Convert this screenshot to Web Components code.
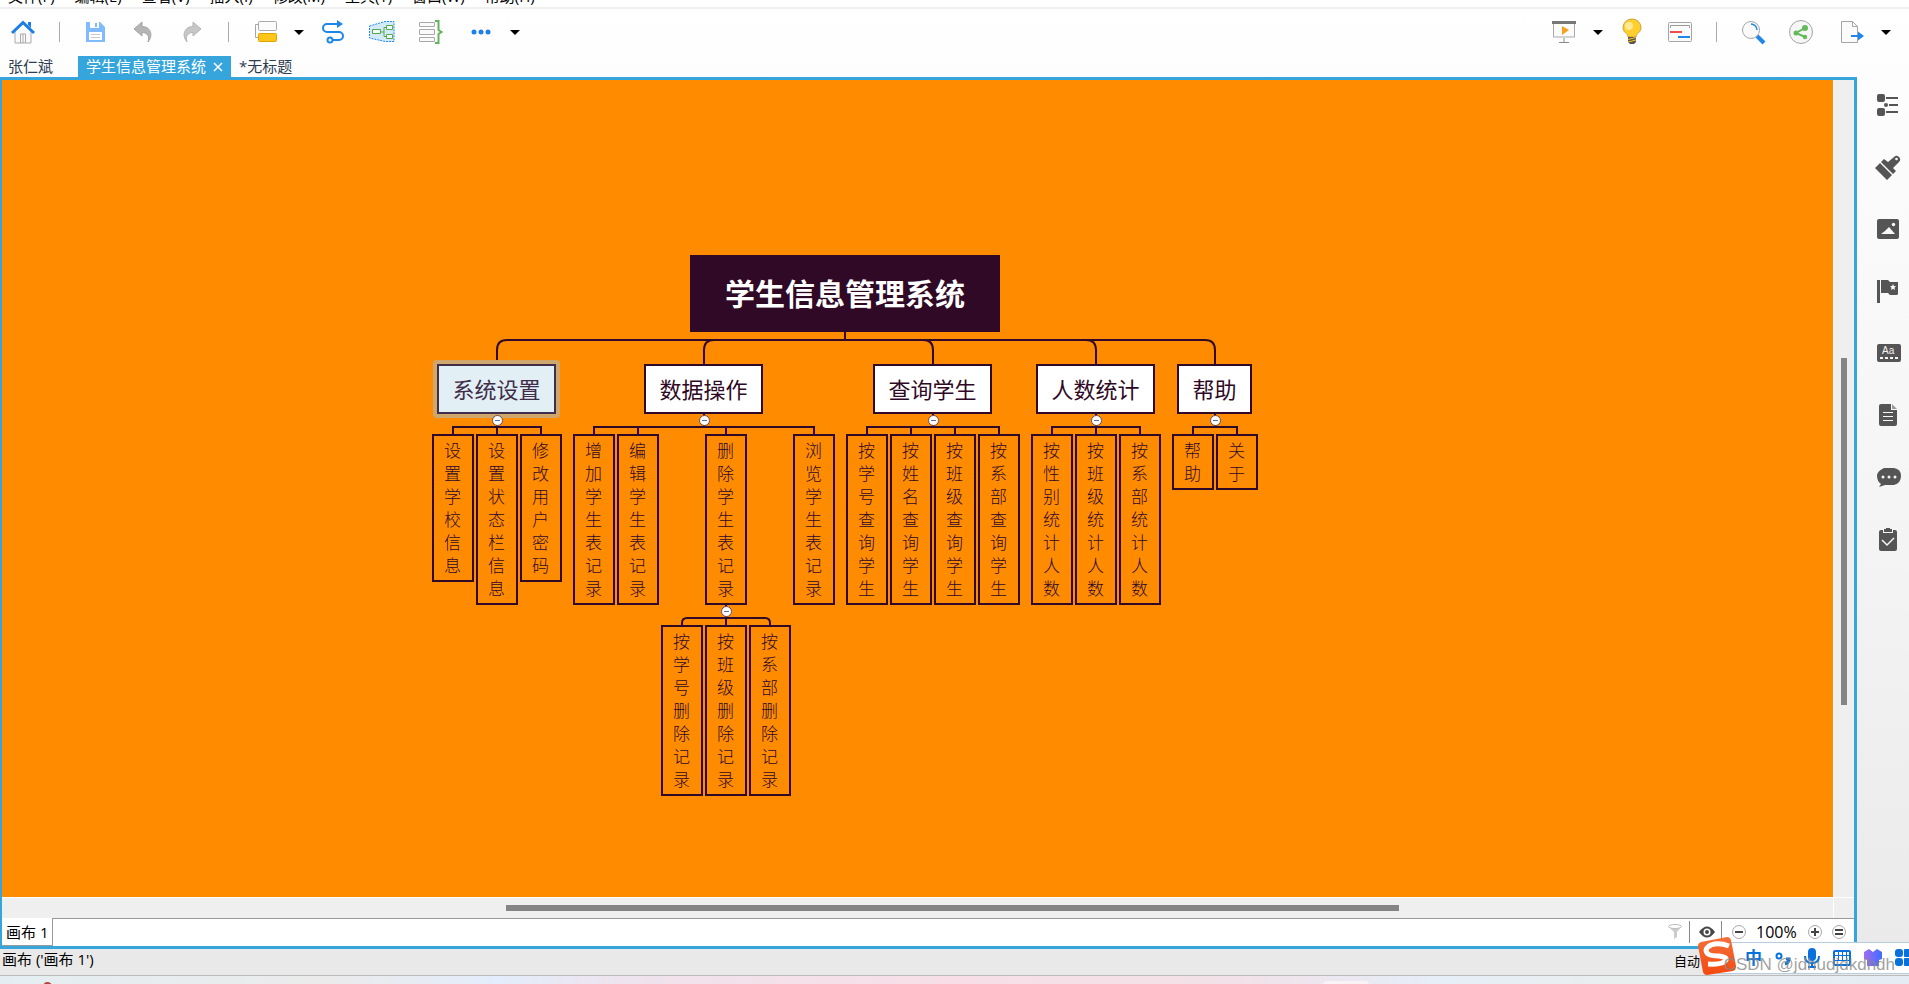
<!DOCTYPE html>
<html lang="zh-CN">
<head>
<meta charset="utf-8">
<title>学生信息管理系统</title>
<style>
    html, body { margin: 0; height: 100%; overflow: hidden; }
    body {
        font-family: "Open Sans", "Noto Sans CJK SC", sans-serif;
        font-size: 15px;
        line-height: 20px;
        color: #000;
        --azul: #35a5dc;
        --tinta: #2f0925;
    }
</style>
</head>
<body>
<app-window></app-window>

<script>
// Icons: [width, height, markup]
const ICONS = {
    home: [24, 24, '<path d="M4 11v12h16V11l-8-7z" fill="#fafafa" stroke="#a9a9a9"/><path d="M9.500 23v-9h5v9M12 14v9" fill="none" stroke="#a9a9a9"/><path d="M17 2h3v6l-3-3z" fill="#1b7fe6"/><path d="M1 13 12 2.500 23 13" fill="none" stroke="#1b7fe6" stroke-width="3"/>'],
    save: [24, 24, '<path d="M2 2h14l5 5v15H2z" fill="#80bbff"/><path d="M6 2h9v6H6z" fill="#fff"/><path d="M11 3h2v4h-2z" fill="#80bbff"/><path d="M5 12h13v8H5z" fill="#fff"/><path d="M7 14.500h9M7 17.500h9" stroke="#c8c8c8"/>'],
    undo: [24, 24, '<path d="M2 9 10 2v4.500c8 0 12 8 6 15.500 2-6-1-9.500-6-9.500V16z" fill="#b5b5b5" stroke="#a5a5a5"/>'],
    redo: [24, 24, '<path d="M21 9 13 2v4.500c-8 0-12 8-6 15.500-2-6 1-9.500 6-9.500V16z" fill="#c6c6c6" stroke="#b5b5b5"/>'],
    topic: [24, 24, '<path d="M6 4.500H2.500v13H5" fill="none" stroke="#a5a5a5"/><rect x="5.500" y="1.500" width="18" height="9" rx="1" fill="#fbfbfb" stroke="#a9a9a9"/><rect x="5.500" y="13.500" width="18" height="8" rx="1" fill="#ffc61a" stroke="#dfa400"/>'],
    relation: [24, 24, '<path d="M18 4H6a4 4 0 0 0 0 8h12a4 4 0 0 1 0 8h-7" fill="none" stroke="#1f87ea" stroke-width="2"/><path d="m16 0 6 4-6 4z" fill="#1f87ea"/><circle cx="9" cy="20" r="2.500" fill="#fff" stroke="#1f87ea" stroke-width="2"/>'],
    boundary: [26, 24, '<path d="M.5 6 16 1.500h9v20h-9L.5 18z" fill="#d3eafd" stroke="#2088e8" stroke-dasharray="2 1"/><path d="M11 12h4M19 7.500h-4v9h4" fill="none" stroke="#54aa4d"/><path d="M3.500 9.500h8v4h-8zM17.500 5.500h6v4h-6zM17.500 14.500h6v4h-6z" fill="#f8fff8" stroke="#54aa4d"/>'],
    summary: [24, 24, '<path d="M.5 2.500h15v4H.5zM.5 9.500h15v5H.5zM.5 17.500h15v4H.5z" fill="#fafafa" stroke="#a9a9a9"/><path d="M16 1h3.500v9l3 2-3 2v9H16" fill="none" stroke="#64b35c" stroke-width="2"/>'],
    dots: [26, 24, '<circle cx="7" cy="12" r="2.500" fill="#1f7fe8"/><circle cx="14" cy="12" r="2.500" fill="#1f7fe8"/><circle cx="21" cy="12" r="2.500" fill="#1f7fe8"/>'],
    arrow: [10, 5, '<path d="M0 0h10L5 5z"/>'],
    present: [24, 24, '<path d="M1.500 3h21v14h-21z" fill="#fbfbfb" stroke="#a9a9a9"/><path d="M0 1h24v3H0z" fill="#777"/><path d="m10 6 7 4-7 5z" fill="#f6a21f"/><path d="M12 18v4M7 22.500h10" stroke="#888"/>'],
    bulb: [24, 26, '<path d="M8 18c0-4-5-4-5-9.500a9 8.500 0 0 1 18 0c0 5.500-5 5.500-5 9.500z" fill="#ffcf2e" stroke="#c9a23b"/><circle cx="9" cy="7" r="4" fill="#ffe993"/><path d="M8 18h8v5l-2 2h-4l-2-2z" fill="#555"/><path d="m8 20.500 8-2M8 23l8-2" stroke="#ffc61a"/>'],
    card: [24, 24, '<rect x=".5" y="2.500" width="23" height="19" rx="1" fill="#fbfbfb" stroke="#a5a5a5"/><path d="M2.500 8V5.500h19V8" fill="none" stroke="#999"/><path d="M2 12h12" stroke="#f24b4b" stroke-width="2"/><path d="M10 17h12" stroke="#1f87ea" stroke-width="2"/>'],
    search: [24, 24, '<path d="m16 16 7 7" stroke="#1f87ea" stroke-width="4"/><circle cx="10" cy="10" r="8.500" fill="#fafafa" stroke="#a5a5a5"/><path d="M10 4a6 6 0 0 1 6 6" fill="none" stroke="#1f87ea" stroke-width="1.500"/>'],
    share: [24, 24, '<circle cx="12" cy="12" r="11.500" fill="#f6f6f6" stroke="#a5a5a5"/><path d="m16 8-9 5 9 4" fill="none" stroke="#64b95c" stroke-width="2"/><circle cx="16" cy="8" r="3" fill="#64b95c"/><circle cx="7" cy="13" r="2.500" fill="#64b95c"/><circle cx="16" cy="17" r="2.200" fill="#64b95c"/>'],
    exporta: [27, 24, '<path d="M4.500 1.500h11l5 5v16h-16z" fill="#fbfbfb" stroke="#a5a5a5"/><path d="M15.500 1.500v5h5" fill="none" stroke="#a5a5a5"/><path d="M14 16h8" stroke="#1f87ea" stroke-width="2"/><path d="m21 11.500 6 4.500-6 4.500z" fill="#1f87ea"/>'],
    outline: [24, 24, '<g fill="#555"><rect x="1" y="1" width="8" height="8" rx="2"/><rect x="1" y="15" width="8" height="8" rx="2"/><circle cx="10" cy="12" r="2"/><path d="M10 4h12v2H10zM13 11h9v2h-9zM10 18h12v2H10z"/></g>'],
    brush: [24, 24, '<g fill="#555"><path d="m-1 13 5-5 12 12-5 5zM5 7l3-3 4 3 6-5a3.500 3.500 0 0 1 5 5l-6 6 3 3-3 3z"/></g><circle cx="20.500" cy="4" r="1.300" fill="#fafafa"/>'],
    image: [24, 24, '<rect x="1" y="2" width="22" height="20" rx="2" fill="#555"/><path d="m5 17 4-3 4-4 6 7z" fill="#fafafa"/><circle cx="17.500" cy="7.500" r="1.700" fill="#fafafa"/>'],
    flag: [24, 24, '<path d="M1 1h3v23H1zM5 1h7l2 2h8v12l-1 1h-7l-2-2H5z" fill="#555"/><path d="m17 5 .9 2 2.100.2-1.500 1.500.5 2.300-2-1.200-2 1.200.5-2.300L14 7.200l2.100-.2z" fill="#fafafa"/>'],
    label: [24, 24, '<rect x="1" y="3" width="24" height="18" rx="2" fill="#555"/><text x="6" y="13" font-size="10" font-family="Liberation Sans" fill="#f6f6f6">Aa</text><path d="M4 17h18" stroke="#f6f6f6" stroke-width="2" stroke-dasharray="3 2"/>'],
    note: [24, 24, '<path d="M3 3q0-2 2-2h10v6h6v14q0 2-2 2H5q-2 0-2-2z" fill="#555"/><path d="m16 1 5 5h-5z" fill="#999"/><path d="M7 9.500h10M7 13.500h10M7 17.500h10" stroke="#f6f6f6"/>'],
    comment: [24, 24, '<path d="M8 3h10q7 1 7 8t-7 9H9l-6 2 2-3q-4-3-4-8t7-8z" fill="#555"/><g fill="#f6f6f6"><circle cx="7" cy="12" r="1.500"/><circle cx="13" cy="12" r="1.500"/><circle cx="19" cy="12" r="1.500"/></g>'],
    task: [24, 24, '<path d="M3 5q0-2 2-2h2v3h10V3h2q2 0 2 2v17q0 2-2 2H5q-2 0-2-2zM8 2h2V1h4v1h2v3H8z" fill="#555"/><path d="m6 13 5 5 7-7" fill="none" stroke="#f6f6f6" stroke-width="1.500"/>'],
    filter: [14, 15, '<path d="m1 3 5 5v7l3-2V8l4-5z" fill="#ccc"/><ellipse cx="7" cy="2.500" rx="6.500" ry="2" fill="#fff" stroke="#bbb"/>'],
    eye: [16, 12, '<path d="M0 6q8-11 16 0-8 11-16 0z" fill="#484848"/><circle cx="8" cy="6" r="3.500" fill="#fff"/><circle cx="8" cy="6" r="2" fill="#484848"/>'],
    minus: [14, 14, '<circle cx="7" cy="7" r="6.500" fill="#fcfcfc" stroke="#aaa"/><path d="M3 7h8" stroke="#444" stroke-width="2"/>'],
    plus: [14, 14, '<circle cx="7" cy="7" r="6.500" fill="#fcfcfc" stroke="#aaa"/><path d="M3 7h8M7 3v8" stroke="#444" stroke-width="2"/>'],
    equal: [14, 14, '<circle cx="7" cy="7" r="6.500" fill="#fcfcfc" stroke="#aaa"/><path d="M3 5h8M3 9h8" stroke="#444" stroke-width="2"/>'],
    sogou: [38, 38, '<defs><linearGradient id="s" y2="1" x2="0"><stop stop-color="#f4703a"/><stop offset="1" stop-color="#f4490f"/></linearGradient></defs><path d="M3 5 29 0q3 0 4 3l5 26q0 4-3 5L9 38q-3 0-4-3L0 9q0-3 3-4z" fill="url(#s)"/><path d="M31 9q-10-4-18-1-8 4-3 9 3 2 11 2 8 1 7 4-3 5-18 4" fill="none" stroke="#fff" stroke-width="5"/>'],
    punct: [16, 16, '<circle cx="4" cy="6" r="2.500" fill="none" stroke="#0871dc" stroke-width="2"/><path d="M11 9h3q0 4-4 5" fill="none" stroke="#0871dc" stroke-width="3"/>'],
    mic: [16, 20, '<rect x="4" y="0" width="8" height="13" rx="4" fill="#0871dc"/><path d="M1 8q0 7 7 7t7-7M8 15v4M4 19h8" fill="none" stroke="#0871dc" stroke-width="2"/>'],
    keyboard: [18, 16, '<rect x="1" y="1" width="16" height="14" rx="1" fill="#fff" stroke="#0871dc" stroke-width="2"/><path d="M1 5.500h16M1 10.500h16M5.500 1v10M9.500 1v10M13.500 1v10" stroke="#0871dc"/>'],
    shirt: [18, 18, '<defs><linearGradient id="t"><stop stop-color="#a36bf2"/><stop offset="1" stop-color="#3d6dff"/></linearGradient></defs><path d="m5 0 4 3 4-3 5 3v7l-3 1v6H3v-6l-3-1V3z" fill="url(#t)"/>'],
    grid: [20, 18, '<g fill="#0871dc"><rect width="8" height="8" rx="3"/><rect y="9" width="8" height="8" rx="3"/><rect x="9" width="8" height="8" rx="1"/><rect x="9" y="9" width="8" height="8" rx="1"/></g>']
};

const RESET = `
    button {
        all: unset;
        box-sizing: border-box;
        cursor: pointer;
    }
    button:focus-visible { outline: 1px dotted #1b7fe6; }
`;

// Diagram data, in canvas pixels
const MAPA = {
    root: { text: '学生信息管理系统', x: 688, y: 175, w: 310, h: 77 },
    branches: [
        { text: '系统设置', x: 435, w: 119, selected: true, leaves: [
            { text: '设置学校信息', x: 430 }, { text: '设置状态栏信息', x: 474 }, { text: '修改用户密码', x: 518 }] },
        { text: '数据操作', x: 642, w: 119, leaves: [
            { text: '增加学生表记录', x: 571 }, { text: '编辑学生表记录', x: 615 },
            { text: '删除学生表记录', x: 703, leaves: [
                { text: '按学号删除记录', x: 659 }, { text: '按班级删除记录', x: 703 }, { text: '按系部删除记录', x: 747 }] },
            { text: '浏览学生表记录', x: 791 }] },
        { text: '查询学生', x: 871, w: 119, leaves: [
            { text: '按学号查询学生', x: 844 }, { text: '按姓名查询学生', x: 888 },
            { text: '按班级查询学生', x: 932 }, { text: '按系部查询学生', x: 976 }] },
        { text: '人数统计', x: 1034, w: 119, leaves: [
            { text: '按性别统计人数', x: 1029 }, { text: '按班级统计人数', x: 1073 }, { text: '按系部统计人数', x: 1117 }] },
        { text: '帮助', x: 1175, w: 75, leaves: [
            { text: '帮助', x: 1170 }, { text: '关于', x: 1214 }] }
    ]
};
const BRANCH_TOP = 284, BRANCH_H = 50, LEAF_TOP = 354, LEAF_W = 42, SUB_TOP = 545;

class AppIcon extends HTMLElement {
    connectedCallback() {
        const [w, h, body] = ICONS[this.getAttribute('name')];
        this.attachShadow({ mode: 'open' }).innerHTML = `
            <style>
                :host { display: block; flex: none; }
                svg { display: block; overflow: visible; }
            </style>
            <svg width="${w}" height="${h}" viewBox="0 0 ${w} ${h}" aria-hidden="true">${body}</svg>`;
    }
}

class IconButton extends HTMLElement {
    connectedCallback() {
        this.attachShadow({ mode: 'open' }).innerHTML = `
            <style>
                ${RESET}
                :host { display: block; flex: none; }
                button { display: block; }
            </style>
            <button type="button" aria-label="${this.getAttribute('label')}">
                <app-icon name="${this.getAttribute('icon')}"></app-icon>
            </button>`;
    }
}

class MenuBar extends HTMLElement {
    connectedCallback() {
        const items = ['文件(F)', '编辑(E)', '查看(V)', '插入(I)', '修改(M)', '工具(T)', '窗口(W)', '帮助(H)'];
        this.attachShadow({ mode: 'open' }).innerHTML = `
            <style>
                ${RESET}
                :host { display: block; border-bottom: 2px solid #efefef; background: #fff; }
                nav {
                    display: flex;
                    align-items: flex-end;
                    gap: 20px;
                    height: 7px;
                    padding: 0 8px;
                    overflow: hidden;
                }
                button { padding-bottom: 1px; }
            </style>
            <nav>${items.map(t => `<button type="button">${t}</button>`).join('')}</nav>`;
    }
}

class ToolBar extends HTMLElement {
    connectedCallback() {
        this.attachShadow({ mode: 'open' }).innerHTML = `
            <style>
                :host {
                    box-sizing: border-box;
                    display: flex;
                    justify-content: space-between;
                    height: 47px;
                    padding: 0 18px 1px 11px;
                }
                .grupo { display: flex; align-items: center; gap: 24px; }
                .split { display: flex; align-items: center; gap: 17px; }
                .split:not(:last-child) { margin-right: -7px; }
                .sep { width: 1px; height: 20px; background: #aaa; }
            </style>
            <div class="grupo">
                <icon-button icon="home" label="主页"></icon-button>
                <span class="sep"></span>
                <icon-button icon="save" label="保存"></icon-button>
                <icon-button icon="undo" label="撤销"></icon-button>
                <icon-button icon="redo" label="重做"></icon-button>
                <span class="sep"></span>
                <div class="split">
                    <icon-button icon="topic" label="主题"></icon-button>
                    <icon-button icon="arrow" label="主题选项"></icon-button>
                </div>
                <icon-button icon="relation" label="联系"></icon-button>
                <icon-button icon="boundary" label="外框"></icon-button>
                <icon-button icon="summary" label="概要"></icon-button>
                <div class="split">
                    <icon-button icon="dots" label="更多"></icon-button>
                    <icon-button icon="arrow" label="更多选项"></icon-button>
                </div>
            </div>
            <div class="grupo">
                <div class="split">
                    <icon-button icon="present" label="演示"></icon-button>
                    <icon-button icon="arrow" label="演示选项"></icon-button>
                </div>
                <icon-button icon="bulb" label="头脑风暴"></icon-button>
                <icon-button icon="card" label="甘特图"></icon-button>
                <span class="sep"></span>
                <icon-button icon="search" label="搜索"></icon-button>
                <icon-button icon="share" label="分享"></icon-button>
                <div class="split">
                    <icon-button icon="exporta" label="导出"></icon-button>
                    <icon-button icon="arrow" label="导出选项"></icon-button>
                </div>
            </div>`;
    }
}

class FileTabs extends HTMLElement {
    connectedCallback() {
        this.attachShadow({ mode: 'open' }).innerHTML = `
            <style>
                ${RESET}
                :host { display: flex; height: 21px; line-height: 21px; color: #2d3c50; }
                .tab { display: flex; align-items: center; padding: 0 8px; }
                .fija { padding-right: 25px; }
                .activa { gap: 7px; background: var(--azul); color: #fff; }
                .cerrar { display: flex; width: 10px; height: 10px; }
                svg { display: block; }
            </style>
            <div class="tab fija"><button type="button">张仁斌</button></div>
            <div class="tab activa">
                <button type="button">学生信息管理系统</button>
                <button type="button" class="cerrar" aria-label="关闭">
                    <svg width="10" height="10"><path d="m1 1 8 8M9 1 1 9" stroke="#fff" stroke-width="1.500"/></svg>
                </button>
            </div>
            <div class="tab"><button type="button">*无标题</button></div>`;
    }
}

class MindNode extends HTMLElement {
    connectedCallback() {
        this.attachShadow({ mode: 'open' }).innerHTML = `
            <style>
                :host {
                    box-sizing: border-box;
                    position: absolute;
                    display: flex;
                    justify-content: center;
                    border: 2px solid var(--tinta);
                    color: var(--tinta);
                }
                :host([level="root"]) {
                    align-items: center;
                    background: var(--tinta);
                    color: #fff;
                    font-size: 30px;
                    font-weight: bold;
                    line-height: 40px;
                }
                :host([level="branch"]) {
                    align-items: center;
                    background: #fff;
                    font-size: 22px;
                    line-height: 30px;
                    white-space: nowrap;
                }
                :host([level="leaf"]) {
                    padding: 3px 0;
                    font-size: 17px;
                    font-weight: 300;
                    line-height: 23px;
                }
                /* one character per line */
                :host([level="leaf"]) span { width: 18px; }
                :host([selected]) {
                    background: #e2eff5;
                    border-color: #3f2d49;
                    color: #3f2d49;
                }
                /* selection halo */
                :host([selected])::after {
                    content: "";
                    position: absolute;
                    inset: -6px;
                    border: 4px solid #cfa76c;
                    border-radius: 4px;
                }
            </style>
            <span><slot></slot></span>`;
    }
}

class MindMap extends HTMLElement {
    connectedCallback() {
        this.nodos = [];
        this.lineas = [];
        this.toggles = [];
        this.construir();
        this.attachShadow({ mode: 'open' }).innerHTML = `
            <style>
                ${RESET}
                :host {
                    display: block;
                    position: relative;
                    overflow: hidden;
                    background: #ff8c00;
                }
                svg { position: absolute; inset: 0; width: 100%; height: 100%; }
                path { fill: none; stroke: var(--tinta); stroke-width: 2; }
                button {
                    position: absolute;
                    display: flex;
                    align-items: center;
                    justify-content: center;
                    width: 11px;
                    height: 11px;
                    border: 1px solid #6b4a50;
                    border-radius: 50%;
                    background: #fff;
                }
                button i { width: 5px; height: 1px; background: #5470b8; }
            </style>
            <svg aria-hidden="true">${this.lineas.map(d => `<path d="${d}"/>`).join('')}</svg>
            ${this.nodos.join('')}
            ${this.toggles.join('')}`;
    }

    nodo(level, n, y, w, h) {
        this.nodos.push(`<mind-node level="${level}" ${n.selected ? 'selected' : ''}
            style="left:${n.x}px;top:${y}px;width:${w}px;height:${h}px">${n.text}</mind-node>`);
    }

    // Children hang from a horizontal bar; r is the radius of its two ends
    hijos(cx, bottom, top, leaves, r) {
        const bar = top - 7;
        const xs = leaves.map(l => l.x + LEAF_W / 2);
        const a = xs[0], b = xs[xs.length - 1];
        this.lineas.push(`M${cx} ${bottom}V${bar}`);
        this.lineas.push(`M${a} ${top}V${bar + r}Q${a} ${bar} ${a + r} ${bar}H${b - r}Q${b} ${bar} ${b} ${bar + r}V${top}`);
        xs.slice(1, -1).forEach(x => this.lineas.push(`M${x} ${bar}V${top}`));
        this.toggles.push(`<button type="button" aria-label="折叠" style="left:${cx - 5}px;top:${bottom + 1}px"><i></i></button>`);
        leaves.forEach(l => {
            const h = l.text.length * 23 + 10;
            this.nodo('leaf', l, top, LEAF_W, h);
            if (l.leaves) this.hijos(l.x + LEAF_W / 2, top + h, SUB_TOP, l.leaves, 5);
        });
    }

    construir() {
        const { root, branches } = MAPA;
        const rx = root.x + root.w / 2;
        const bar = root.y + root.h + 8;
        this.nodo('root', root, root.y, root.w, root.h);
        this.lineas.push(`M${rx} ${root.y + root.h}V${bar}`);
        branches.forEach(b => {
            const cx = Math.round(b.x + b.w / 2);
            const lado = cx < rx ? 10 : -10;
            this.lineas.push(`M${rx} ${bar}H${cx + lado}Q${cx} ${bar} ${cx} ${bar + 10}V${BRANCH_TOP}`);
            this.nodo('branch', b, BRANCH_TOP, b.w, BRANCH_H);
            this.hijos(cx, BRANCH_TOP + BRANCH_H, LEAF_TOP, b.leaves, 0);
        });
    }
}

class SheetBar extends HTMLElement {
    connectedCallback() {
        this.attachShadow({ mode: 'open' }).innerHTML = `
            <style>
                ${RESET}
                :host { display: flex; height: 28px; background: #fff; }
                .hoja {
                    padding: 0 4px;
                    border-right: 1px solid #999;
                    border-bottom: 1px solid #999;
                }
                .resto {
                    flex: 1;
                    display: flex;
                    align-items: center;
                    justify-content: flex-end;
                    padding: 0 8px 2px 0;
                    border-top: 1px solid #999;
                }
                .sep { width: 1px; height: 22px; background: #888; }
                .filtro { margin-right: 7px; }
                .ojo { margin: 0 6px 0 9px; }
                .zoom { display: flex; align-items: center; gap: 10px; margin-left: 10px; }
                output { width: 42px; font-size: 16px; }
            </style>
            <button type="button" class="hoja">画布 1</button>
            <div class="resto">
                <icon-button class="filtro" icon="filter" label="筛选"></icon-button>
                <span class="sep"></span>
                <icon-button class="ojo" icon="eye" label="显示"></icon-button>
                <span class="sep"></span>
                <div class="zoom">
                    <icon-button icon="minus" label="缩小"></icon-button>
                    <output>100%</output>
                    <icon-button icon="plus" label="放大"></icon-button>
                    <icon-button icon="equal" label="实际大小"></icon-button>
                </div>
            </div>`;
    }
}

class EditorFrame extends HTMLElement {
    connectedCallback() {
        this.attachShadow({ mode: 'open' }).innerHTML = `
            <style>
                :host {
                    box-sizing: border-box;
                    display: flex;
                    flex-direction: column;
                    min-width: 0;
                    border: 3px solid var(--azul);
                    border-left-width: 2px;
                    background: #efefef;
                }
                .vista {
                    flex: 1;
                    min-height: 0;
                    display: grid;
                    grid-template: minmax(0, 1fr) 20px / minmax(0, 1fr) 20px;
                    gap: 1px;
                    background: #fff;
                }
                .barra { display: flex; align-items: center; background: #efefef; }
                .barra.v { flex-direction: column; }
                .barra i { background: #858585; }
                .barra.h::before { content: ""; width: 27.500%; }
                .barra.h i { width: 48.800%; height: 6px; }
                .barra.v::before { content: ""; height: 34%; }
                .barra.v i { width: 6px; height: 42.500%; }
                .esquina { background: #efefef; }
            </style>
            <div class="vista">
                <mind-map></mind-map>
                <div class="barra v"><i></i></div>
                <div class="barra h"><i></i></div>
                <div class="esquina"></div>
            </div>
            <sheet-bar></sheet-bar>`;
    }
}

class SideBar extends HTMLElement {
    connectedCallback() {
        const items = [['outline', '大纲'], ['brush', '格式'], ['image', '图片'], ['flag', '图标'],
            ['label', '标签'], ['note', '备注'], ['comment', '批注'], ['task', '任务']];
        this.attachShadow({ mode: 'open' }).innerHTML = `
            <style>
                :host {
                    display: flex;
                    flex-direction: column;
                    align-items: center;
                    gap: 38px;
                    width: 42px;
                    padding: 16px 0 0 10px;
                }
            </style>
            ${items.map(([i, l]) => `<icon-button icon="${i}" label="${l}"></icon-button>`).join('')}`;
    }
}

class StatusBar extends HTMLElement {
    connectedCallback() {
        this.attachShadow({ mode: 'open' }).innerHTML = `
            <style>
                :host {
                    display: flex;
                    justify-content: space-between;
                    height: 26px;
                    padding: 0 209px 0 2px;
                    border-bottom: 1px solid #bbb;
                    background: #e9e9e9;
                    line-height: 20px;
                }
                .auto { font-size: 13px; line-height: 24px; }
            </style>
            <span>画布 ('画布 1')</span>
            <span class="auto">自动</span>`;
    }
}

class ImeBar extends HTMLElement {
    connectedCallback() {
        this.attachShadow({ mode: 'open' }).innerHTML = `
            <style>
                ${RESET}
                :host {
                    box-sizing: border-box;
                    position: absolute;
                    right: 0;
                    bottom: 10px;
                    display: flex;
                    align-items: center;
                    gap: 13px;
                    width: 192px;
                    height: 32px;
                    padding-left: 28px;
                    border: solid #b5cde3;
                    border-width: 1px 0;
                    background: #fff;
                    color: #0871dc;
                }
                .logo { position: absolute; left: -19px; bottom: -2px; }
                .zh { font-size: 17px; font-weight: bold; }
                .marca {
                    position: absolute;
                    right: 14px;
                    bottom: -2px;
                    font: 17px/20px "Liberation Sans", sans-serif;
                    white-space: nowrap;
                    color: #888c;
                }
            </style>
            <app-icon class="logo" name="sogou"></app-icon>
            <button type="button" class="zh">中</button>
            <icon-button icon="punct" label="标点"></icon-button>
            <icon-button icon="mic" label="语音"></icon-button>
            <icon-button icon="keyboard" label="键盘"></icon-button>
            <icon-button icon="shirt" label="皮肤"></icon-button>
            <icon-button icon="grid" label="工具箱"></icon-button>
            <span class="marca">CSDN @jdhudjdkdhdh</span>`;
    }
}

class AppWindow extends HTMLElement {
    connectedCallback() {
        this.attachShadow({ mode: 'open' }).innerHTML = `
            <style>
                :host {
                    position: relative;
                    display: flex;
                    flex-direction: column;
                    height: 100vh;
                    overflow: hidden;
                    background: linear-gradient(#fff 0, #fdfdfd 8%, #f4f4f4 55%, #e9e9e9 100%);
                }
                main { flex: 1; min-height: 0; display: flex; }
                editor-frame { flex: 1; }
                .escritorio {
                    position: relative;
                    height: 8px;
                    overflow: hidden;
                    background: linear-gradient(90deg, #e4eef2 0, #ebebeb 17%, #e3edfb 26%, #f0e2ec 34%, #f8dfe7 50%, #f2e1e8 65%, #e6eef8 75%, #e9eeee 85%, #e5ecf4 100%);
                }
                .escritorio::before {
                    content: "";
                    position: absolute;
                    left: 43px;
                    top: 6px;
                    width: 9px;
                    height: 9px;
                    border-radius: 50%;
                    background: #b5443a;
                }
                .escritorio::after {
                    content: "";
                    position: absolute;
                    left: 69.300%;
                    top: 5px;
                    width: 46px;
                    height: 9px;
                    border-radius: 4px;
                    background: #faf3f6;
                }
            </style>
            <menu-bar></menu-bar>
            <tool-bar></tool-bar>
            <file-tabs></file-tabs>
            <main>
                <editor-frame></editor-frame>
                <side-bar></side-bar>
            </main>
            <status-bar></status-bar>
            <div class="escritorio"></div>
            <ime-bar></ime-bar>`;
    }
}

customElements.define('app-icon', AppIcon);
customElements.define('icon-button', IconButton);
customElements.define('menu-bar', MenuBar);
customElements.define('tool-bar', ToolBar);
customElements.define('file-tabs', FileTabs);
customElements.define('mind-node', MindNode);
customElements.define('mind-map', MindMap);
customElements.define('sheet-bar', SheetBar);
customElements.define('editor-frame', EditorFrame);
customElements.define('side-bar', SideBar);
customElements.define('status-bar', StatusBar);
customElements.define('ime-bar', ImeBar);
customElements.define('app-window', AppWindow);
</script>
</body>
</html>
